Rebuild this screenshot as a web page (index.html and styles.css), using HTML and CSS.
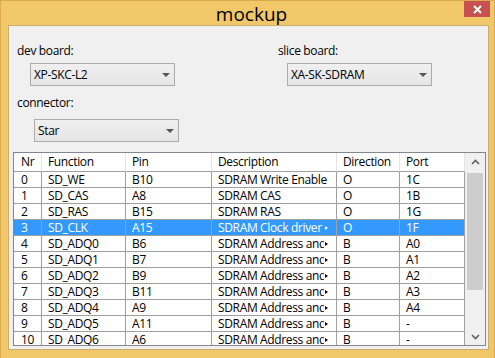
FILE: index.html
```html
<!DOCTYPE html>
<html lang="en">

<head>
    <meta charset="UTF-8">
    <link rel="stylesheet" href="styles.css">
</head>

<body>
    <div class="window">
        <div class="titlebar">
            <span class="title">mockup</span>
            <div class="close-btn">
                <svg width="9" height="9" viewBox="0 0 9 9">
                    <path d="M1 1 L8 8 M8 1 L1 8" stroke="#fff" stroke-width="2" />
                </svg>
            </div>
        </div>
        <div class="panel">
            <div class="form">
                <div class="col">
                    <div class="lbl">dev board:</div>
                    <div class="combo combo-dev"><span>XP-SKC-L2</span><i class="arrow"></i></div>
                    <div class="lbl lbl-conn">connector:</div>
                    <div class="combo combo-conn"><span>Star</span><i class="arrow"></i></div>
                </div>
                <div class="col">
                    <div class="lbl">slice board:</div>
                    <div class="combo combo-slice"><span>XA-SK-SDRAM</span><i class="arrow"></i></div>
                </div>
            </div>
            <div class="table-box">
                <div class="grid">
                    <div class="row head">
                        <div class="cell nr">Nr</div>
                        <div class="cell">Function</div>
                        <div class="cell">Pin</div>
                        <div class="cell">Description</div>
                        <div class="cell">Direction</div>
                        <div class="cell">Port</div>
                    </div>
                    <div class="row">
                        <div class="cell nr">0</div>
                        <div class="cell">SD_WE</div>
                        <div class="cell">B10</div>
                        <div class="cell">SDRAM Write Enable</div>
                        <div class="cell">O</div>
                        <div class="cell">1C</div>
                    </div>
                    <div class="row">
                        <div class="cell nr">1</div>
                        <div class="cell">SD_CAS</div>
                        <div class="cell">A8</div>
                        <div class="cell">SDRAM CAS</div>
                        <div class="cell">O</div>
                        <div class="cell">1B</div>
                    </div>
                    <div class="row">
                        <div class="cell nr">2</div>
                        <div class="cell">SD_RAS</div>
                        <div class="cell">B15</div>
                        <div class="cell">SDRAM RAS</div>
                        <div class="cell">O</div>
                        <div class="cell">1G</div>
                    </div>
                    <div class="row selected">
                        <div class="cell nr">3</div>
                        <div class="cell">SD_CLK</div>
                        <div class="cell">A15</div>
                        <div class="cell elide"><span class="txt">SDRAM Clock driver</span><i class="tri"></i></div>
                        <div class="cell">O</div>
                        <div class="cell">1F</div>
                    </div>
                    <div class="row">
                        <div class="cell nr">4</div>
                        <div class="cell">SD_ADQ0</div>
                        <div class="cell">B6</div>
                        <div class="cell elide"><span class="txt">SDRAM Address and Data 0</span><i class="tri"></i></div>
                        <div class="cell">B</div>
                        <div class="cell">A0</div>
                    </div>
                    <div class="row">
                        <div class="cell nr">5</div>
                        <div class="cell">SD_ADQ1</div>
                        <div class="cell">B7</div>
                        <div class="cell elide"><span class="txt">SDRAM Address and Data 1</span><i class="tri"></i></div>
                        <div class="cell">B</div>
                        <div class="cell">A1</div>
                    </div>
                    <div class="row">
                        <div class="cell nr">6</div>
                        <div class="cell">SD_ADQ2</div>
                        <div class="cell">B9</div>
                        <div class="cell elide"><span class="txt">SDRAM Address and Data 2</span><i class="tri"></i></div>
                        <div class="cell">B</div>
                        <div class="cell">A2</div>
                    </div>
                    <div class="row">
                        <div class="cell nr">7</div>
                        <div class="cell">SD_ADQ3</div>
                        <div class="cell">B11</div>
                        <div class="cell elide"><span class="txt">SDRAM Address and Data 3</span><i class="tri"></i></div>
                        <div class="cell">B</div>
                        <div class="cell">A3</div>
                    </div>
                    <div class="row">
                        <div class="cell nr">8</div>
                        <div class="cell">SD_ADQ4</div>
                        <div class="cell">A9</div>
                        <div class="cell elide"><span class="txt">SDRAM Address and Data 4</span><i class="tri"></i></div>
                        <div class="cell">B</div>
                        <div class="cell">A4</div>
                    </div>
                    <div class="row">
                        <div class="cell nr">9</div>
                        <div class="cell">SD_ADQ5</div>
                        <div class="cell">A11</div>
                        <div class="cell elide"><span class="txt">SDRAM Address and Data 5</span><i class="tri"></i></div>
                        <div class="cell">B</div>
                        <div class="cell">-</div>
                    </div>
                    <div class="row">
                        <div class="cell nr">10</div>
                        <div class="cell">SD_ADQ6</div>
                        <div class="cell">A6</div>
                        <div class="cell elide"><span class="txt">SDRAM Address and Data 6</span><i class="tri"></i></div>
                        <div class="cell">B</div>
                        <div class="cell">-</div>
                    </div>
                </div>
                <div class="scrollbar">
                    <div class="sb-btn">
                        <svg width="9" height="6" viewBox="0 0 9 6">
                            <path d="M1 5 L4.5 1.5 L8 5" fill="none" stroke="#606060" stroke-width="1.6" />
                        </svg>
                    </div>
                    <div class="sb-track">
                        <div class="sb-thumb"></div>
                    </div>
                    <div class="sb-btn">
                        <svg width="9" height="6" viewBox="0 0 9 6">
                            <path d="M1 1 L4.5 4.5 L8 1" fill="none" stroke="#606060" stroke-width="1.6" />
                        </svg>
                    </div>
                </div>
            </div>
        </div>
    </div>
</body>

</html>
```

FILE: styles.css
```css
body {
    margin: 0;
    font-family: "Open Sans", "Segoe UI", sans-serif;
    font-size: 12px;
    letter-spacing: -0.35px;
    color: #000;
    background-color: #f0c869;
}

.window {
    height: 358px;
    box-sizing: border-box;
    border: 1px solid #d9ab4c;
    border-bottom: none;
    display: flex;
    flex-direction: column;
}

.titlebar {
    height: 24px;
    flex: none;
    position: relative;
    display: flex;
    justify-content: center;
    align-items: center;
}

.title {
    font-size: 19px;
    font-weight: 500;
    letter-spacing: 0;
    padding-left: 8px;
    padding-top: 1px;
}

.close-btn {
    position: absolute;
    top: 0;
    right: 4px;
    width: 26px;
    height: 16px;
    background-color: #c75050;
    display: flex;
    justify-content: center;
    align-items: center;
}

.panel {
    flex: 1;
    margin: 0 5px 8px 7px;
    background-color: #f0f0f0;
    border: 1px solid #c9ae70;
}

/* top form with the three combo boxes */
.form {
    display: grid;
    grid-template-columns: 261px auto;
    padding: 17px 0 0 8px;
}

.col {
    display: flex;
    flex-direction: column;
    align-items: flex-start;
}

.lbl {
    height: 16px;
    line-height: 16px;
}

.lbl-conn {
    margin-top: 9px;
}

.combo {
    width: 145px;
    height: 23px;
    box-sizing: border-box;
    margin-top: 4px;
    padding: 0 4px 0 3px;
    border: 1px solid #acacac;
    background: linear-gradient(#f0f0f0, #e5e5e5);
    display: flex;
    justify-content: space-between;
    align-items: center;
}

.combo-dev {
    margin-left: 13px;
}

.combo-conn {
    margin-left: 17px;
    margin-top: 8px;
}

.combo-slice {
    margin-left: 9px;
}

.arrow {
    width: 0;
    height: 0;
    border-left: 4px solid transparent;
    border-right: 4px solid transparent;
    border-top: 4px solid #565656;
}

/* table */
.table-box {
    margin: 10px 0 0 4px;
    width: 473px;
    height: 194px;
    box-sizing: border-box;
    border: 1px solid #828790;
    background-color: #fff;
    display: flex;
}

.grid {
    width: 451px;
    overflow: hidden;
}

.row {
    display: grid;
    grid-template-columns: 28px 84px 86px 125px 63px 65px;
    height: 16px;
}

.cell {
    box-sizing: border-box;
    height: 16px;
    line-height: 15px;
    padding: 0 6px;
    border-right: 1px solid #a0a0a0;
    border-bottom: 1px solid #a0a0a0;
    white-space: nowrap;
    overflow: hidden;
}

.cell.nr {
    padding-left: 7px;
}

.head {
    height: 19px;
}

.head .cell {
    height: 19px;
    line-height: 18px;
    border-right-color: #e5e5e5;
}

.selected .cell {
    background-color: #3399ff;
    color: #fff;
}

.elide {
    display: flex;
    align-items: center;
}

.elide .txt {
    flex: 1;
    overflow: hidden;
}

.tri {
    flex: none;
    width: 0;
    height: 0;
    margin: 0 2px 0 1px;
    border-top: 2.5px solid transparent;
    border-bottom: 2.5px solid transparent;
    border-left: 3px solid #000;
}

.selected .tri {
    border-left-color: #fff;
}

.scrollbar {
    width: 20px;
    background-color: #f0f0f0;
    display: flex;
    flex-direction: column;
}

.sb-btn {
    height: 17px;
    display: flex;
    justify-content: center;
    align-items: center;
}

.sb-track {
    flex: 1;
    padding: 3px 2px 0;
}

.sb-thumb {
    height: 117px;
    background-color: #cdcdcd;
}
```
